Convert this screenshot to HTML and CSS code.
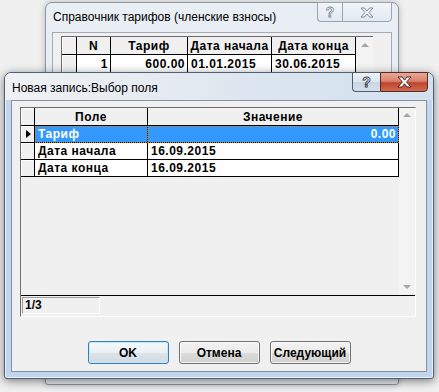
FILE: index.html
```html
<!DOCTYPE html>
<html lang="ru">
<head>
  <meta charset="UTF-8">
  <title>Новая запись:Выбор поля</title>
  <link rel="stylesheet" href="styles.css">
</head>
<body>
  <div id="desktop">

    <div class="window backWindow">
      <div class="titleBar">
        <span class="titleText">Справочник тарифов (членские взносы)</span>
        <div class="captionButtons">
          <span class="capBtn helpBtn">?</span>
          <span class="capBtn closeBtn">
            <svg width="14" height="11" viewBox="0 0 14 11"><path d="M1 1h3.5L7 4 9.5 1H13L9 5.5 13 10H9.5L7 7 4.5 10H1L5 5.5z" fill="#f4f7fa" stroke="#7f8a95" stroke-width="1"/></svg>
          </span>
        </div>
      </div>
      <div class="client">
        <div class="backGrid">
          <div class="hd ind"></div>
          <div class="hd">N</div>
          <div class="hd">Тариф</div>
          <div class="hd">Дата начала</div>
          <div class="hd">Дата конца</div>
          <div class="scroll backScroll"><span class="arrowUp"></span></div>
          <div class="cell ind"></div>
          <div class="cell num">1</div>
          <div class="cell num">600.00</div>
          <div class="cell">01.01.2015</div>
          <div class="cell">30.06.2015</div>
        </div>
      </div>
    </div>

    <div class="window frontWindow">
      <div class="titleBar">
        <span class="titleText">Новая запись:Выбор поля</span>
        <div class="captionButtons">
          <span class="capBtn helpBtn">?</span>
          <span class="capBtn closeBtn">
            <svg width="15" height="12" viewBox="0 0 15 12"><path d="M1 1h4l2.5 3.2L10 1h4L9.6 6 14 11h-4L7.5 7.8 5 11H1l4.4-5z" fill="#fff" stroke="#4a2a24" stroke-width="1"/></svg>
          </span>
        </div>
      </div>
      <div class="client frontClient">
        <div class="gridPanel">
          <div class="fieldGrid">
            <div class="hd ind"></div>
            <div class="hd">Поле</div>
            <div class="hd">Значение</div>
            <div class="scroll frontScroll"><span class="arrowUp"></span><span class="arrowDown"></span></div>

            <div class="cell ind current"><span class="pointer"></span></div>
            <div class="cell selected">Тариф</div>
            <div class="cell selected num">0.00</div>

            <div class="cell ind"></div>
            <div class="cell">Дата начала</div>
            <div class="cell">16.09.2015</div>

            <div class="cell ind"></div>
            <div class="cell">Дата конца</div>
            <div class="cell">16.09.2015</div>

            <div class="emptyArea"></div>
          </div>
          <div class="statusStrip">
            <div class="recordCounter">1/3</div>
          </div>
        </div>
        <div class="buttonRow">
          <button class="dlgBtn focused">OK</button>
          <button class="dlgBtn">Отмена</button>
          <button class="dlgBtn">Следующий</button>
        </div>
      </div>
    </div>

  </div>
</body>
</html>
```

FILE: styles.css
```css
* {
  box-sizing: border-box;
}

body {
  margin: 0;
  background-color: #f0f0f0;
  font-family: "Liberation Sans", Arial, sans-serif;
  font-size: 12px;
  color: #000;
}

#desktop {
  position: relative;
  width: 439px;
  height: 392px;
  overflow: hidden;
}

/* windows */
.window {
  position: absolute;
  display: flex;
  flex-direction: column;
}

.titleBar {
  position: relative;
  display: flex;
  align-items: center;
  flex-shrink: 0;
}

.titleText {
  white-space: nowrap;
}

.captionButtons {
  position: absolute;
  top: -1px;
  display: flex;
}

.capBtn {
  display: flex;
  align-items: center;
  justify-content: center;
  font-weight: bold;
  font-size: 14px;
}

.backWindow {
  left: 45px;
  top: 2px;
  width: 354px;
  height: 383px;
  background-color: #e8eef4;
  border: 1px solid #8e979f;
  border-radius: 7px 7px 3px 3px;
  padding: 0 6px 6px 6px;
  box-shadow: 0 0 6px rgba(0, 0, 0, 0.25);
}

.backWindow .titleBar {
  height: 29px;
  padding-left: 1px;
  padding-bottom: 1px;
}

.backWindow .captionButtons {
  right: 0;
}

.backWindow .capBtn {
  height: 20px;
  background: linear-gradient(#f1f5f9, #e2e9f0);
  border: 1px solid #9aa5b0;
  color: #f4f7fa;
  -webkit-text-stroke: 0.8px #7f8a95;
}

.backWindow .helpBtn {
  width: 25px;
  border-radius: 0 0 0 4px;
  border-right: none;
}

.backWindow .closeBtn {
  width: 50px;
  border-radius: 0 0 4px 0;
}

.client {
  flex: 1;
  background-color: #f0f0f0;
  border: 1px solid #a3abb3;
}

.backWindow .client {
  padding: 3px 0 0 8px;
}

/* back grid */
.backGrid {
  display: grid;
  grid-template-columns: 15px 34px 77px 84px 84px 17px;
  grid-template-rows: 18px 18px 18px;
  width: 312px;
  border-left: 1px solid #6b6b6b;
  border-top: 1px solid #6b6b6b;
  font-weight: bold;
}

.hd,
.cell {
  border-right: 1px solid #000;
  border-bottom: 1px solid #000;
  display: flex;
  align-items: center;
  white-space: nowrap;
  overflow: hidden;
  padding: 0 3px;
  letter-spacing: 0.5px;
}

.hd {
  background-color: #f0f0f0;
  justify-content: center;
}

.cell {
  background-color: #fff;
}

.cell.num {
  justify-content: flex-end;
  padding-right: 2px;
}

.ind,
.cell.ind {
  background-color: #f0f0f0;
  box-shadow: inset 1px 1px 0 #fff;
  padding: 0;
}

.scroll {
  background-color: #f3f3f3;
  display: flex;
  flex-direction: column;
  align-items: center;
  justify-content: space-between;
  padding: 6px 0;
}

.backScroll {
  grid-row: 1 / 4;
  grid-column: 6;
}

.arrowUp,
.arrowDown {
  width: 0;
  height: 0;
  border-left: 4px solid transparent;
  border-right: 4px solid transparent;
}

.arrowUp {
  border-bottom: 4px solid #a6a6a6;
}

.arrowDown {
  border-top: 4px solid #a6a6a6;
}

/* front dialog */
.frontWindow {
  left: 4px;
  top: 72px;
  width: 430px;
  height: 307px;
  background-color: #c1d6ed;
  border: 1px solid #4f6176;
  border-radius: 7px 7px 3px 3px;
  padding: 0 6px 6px 6px;
  box-shadow: inset 0 0 0 1px rgba(255, 255, 255, 0.65), 0 2px 10px rgba(0, 0, 0, 0.5);
}

.frontWindow .titleBar {
  height: 27px;
  margin: 0 -6px;
  padding-left: 7px;
  padding-top: 3px;
  border-radius: 6px 6px 0 0;
  background: linear-gradient(90deg, #eef1f4 0%, #e6ebf1 35%, #dbe5ef 60%, #d3e1ef 100%);
}

.frontWindow .captionButtons {
  right: 5px;
}

.frontWindow .capBtn {
  height: 20px;
  border: 1px solid #4e5d6d;
}

.frontWindow .helpBtn {
  width: 28px;
  border-right: none;
  border-radius: 0 0 0 4px;
  background: linear-gradient(#edf2f7 0%, #dbe4ee 50%, #c9d6e3 51%, #d4e0ec 100%);
  color: #fff;
  -webkit-text-stroke: 0.9px #3b4550;
}

.frontWindow .closeBtn {
  width: 48px;
  border-radius: 0 0 4px 0;
  border-color: #5b2b22;
  background: linear-gradient(#e9a797 0%, #d9826e 45%, #c2442d 55%, #cf6a50 100%);
}

.frontClient {
  display: flex;
  flex-direction: column;
  border-color: #8393a5;
  padding: 6px 0 0 8px;
}

.gridPanel {
  width: 396px;
  height: 210px;
  border: 1px solid;
  border-color: #6d6d6d #ffffff #ffffff #6d6d6d;
  display: flex;
  flex-direction: column;
}

.fieldGrid {
  display: grid;
  grid-template-columns: 14px 113px 251px 16px;
  grid-template-rows: 18px 17px 17px 17px 1fr;
  height: 188px;
  border-bottom: 1px solid #000;
  font-weight: bold;
}

.frontScroll {
  grid-row: 1 / 6;
  grid-column: 4;
  padding: 5px 0 6px;
}

.cell.selected {
  background-color: #3399ff;
  color: #fff;
  outline: 1px dotted #c8893a;
  outline-offset: -1px;
}

.cell.current {
  justify-content: center;
}

.pointer {
  width: 0;
  height: 0;
  border-left: 5px solid #000;
  border-top: 4px solid transparent;
  border-bottom: 4px solid transparent;
  margin-left: 1px;
}

.emptyArea {
  grid-column: 1 / 4;
  background-color: #f0f0f0;
}

.statusStrip {
  flex: 1;
  padding: 1px 0 0 1px;
}

.recordCounter {
  width: 78px;
  height: 17px;
  border: 1px solid;
  border-color: #a0a0a0 #ffffff #ffffff #a0a0a0;
  font-weight: bold;
  padding-left: 2px;
  line-height: 15px;
}

.buttonRow {
  display: flex;
  justify-content: center;
  gap: 10px;
  margin-top: 24px;
  padding-right: 8px;
}

.dlgBtn {
  width: 81px;
  height: 23px;
  font-family: "Liberation Sans", Arial, sans-serif;
  font-size: 12px;
  font-weight: bold;
  color: #000;
  border: 1px solid #707070;
  border-radius: 3px;
  background: linear-gradient(#f2f2f2 0%, #ebebeb 50%, #dddddd 51%, #cfcfcf 100%);
  box-shadow: inset 0 0 0 1px rgba(255, 255, 255, 0.8);
  padding: 0;
}

.dlgBtn.focused {
  border-color: #3c7fb1;
  box-shadow: inset 0 0 0 1px #c6e6fb;
  background: linear-gradient(#f4f8fb 0%, #eaf0f4 50%, #dce4ea 51%, #d0dae2 100%);
}
```
